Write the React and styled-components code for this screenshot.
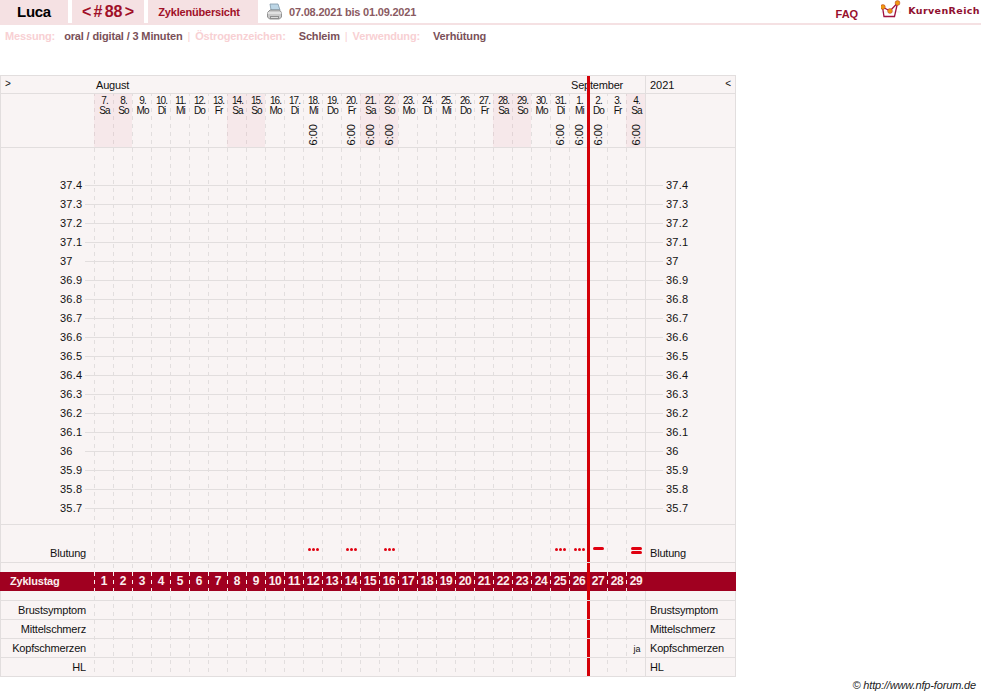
import React from "react";
import styled, { createGlobalStyle } from "styled-components";

const Global = createGlobalStyle`
  html, body { margin: 0; padding: 0; background: #fff; }
  body { font-family: "Liberation Sans", Arial, sans-serif; font-size: 11px; color: #111; }
`;

const GRID = "#e2dede";
const PANEL = "#f9f4f4";
const PINK = "#f5e1e3";
const COLS = "93px repeat(29, 19px) 90px";

const dashLayers = (bg, line, left, right) => `
  linear-gradient(${bg}, ${bg}) left top / ${left}px 100% no-repeat,
  linear-gradient(${bg}, ${bg}) right top / ${right}px 100% no-repeat,
  linear-gradient(to bottom, transparent 0 4px, ${bg} 4px 8px) 0 0 / 100% 8px repeat-y,
  linear-gradient(to right, ${line} 0 1px, transparent 1px) ${left}px 0 / 19px 100% repeat-x,
  ${bg}
`;

const Page = styled.div`
  width: 981px;
  height: 696px;
  overflow: hidden;
`;
const Header = styled.header`
  display: flex;
  align-items: stretch;
  height: 23px;
  border-bottom: 2px solid ${PINK};
`;
const Tab = styled.div`
  display: flex;
  align-items: center;
  justify-content: center;
  box-sizing: border-box;
  width: ${(p) => p.$w}px;
  margin-right: ${(p) => p.$gap ?? 4}px;
  background: ${PINK};
  font-weight: bold;
  color: #a01028;
`;
const NameTab = styled(Tab)`
  font-size: 15px;
  letter-spacing: -0.3px;
  color: #000;
`;
const CycleTab = styled(Tab)`
  font-size: 16px;
  word-spacing: -2.2px;
`;
const OverviewTab = styled(Tab)`
  font-size: 11px;
  letter-spacing: -0.2px;
  padding-right: 8px;
`;
const PrintIcon = styled.svg`
  width: 17px;
  height: 18px;
  margin: 3px 6px 0 8px;
`;
const DateRange = styled.div`
  align-self: center;
  font-size: 11px;
  font-weight: bold;
  letter-spacing: -0.2px;
  color: #8a5a62;
`;
const HeaderEnd = styled.div`
  margin-left: auto;
  display: flex;
  align-items: flex-start;
`;
const Faq = styled.div`
  font-size: 11px;
  font-weight: bold;
  color: #98102c;
  margin: 8px 23px 0 0;
`;
const LogoIcon = styled.svg`
  width: 20px;
  height: 19px;
  margin-right: 7px;
`;
const LogoText = styled.div`
  font-family: "DejaVu Sans", sans-serif;
  font-size: 9.5px;
  font-weight: bold;
  letter-spacing: 0.4px;
  color: #901030;
  margin: 5px 1px 0 0;
`;
const Legend = styled.div`
  display: flex;
  height: 50px;
  padding: 5px 0 0 5px;
  box-sizing: border-box;
  font-size: 11px;
  font-weight: bold;
  letter-spacing: -0.15px;
  line-height: 13px;
`;
const LegendKey = styled.span`
  color: #f8d0d3;
  margin-right: ${(p) => p.$gap}px;
`;
const LegendValue = styled.span`
  color: #7a5058;
`;
const LegendSep = styled.span`
  color: #f8d0d3;
  font-weight: normal;
  margin: 0 5px 0 5px;
`;

const Chart = styled.section`
  width: 736px;
  box-sizing: border-box;
  background: ${dashLayers(PANEL, GRID, 93, 90)};
  border: 1px solid ${GRID};
  border-bottom: 0;
  color: #111;
`;
const Row = styled.div`
  position: relative;
  display: grid;
  grid-template-columns: ${COLS};
  height: ${(p) => p.$h}px;
  border-bottom: ${(p) => (p.$plain ? "0" : `1px solid ${GRID}`)};
`;
const MonthRow = styled(Row)`
  background: ${PANEL};
`;
const TopBlock = styled.div`
  position: relative;
`;
const TempRow = styled(Row)`
  background: linear-gradient(${GRID}, ${GRID}) 0 9px / 100% 1px no-repeat;
`;
const Marker = styled.div`
  position: absolute;
  top: 0;
  bottom: 0;
  left: 586px;
  width: 3px;
  background: #d40008;
  z-index: 2;
`;
const MonthCell = styled.div`
  grid-column: span ${(p) => p.$span};
  padding-left: 2px;
  line-height: 18px;
  font-size: 11px;
  letter-spacing: -0.2px;
`;
const CornerCell = styled.div`
  display: flex;
  justify-content: space-between;
  padding: 0 4px;
  line-height: 18px;
  font-size: 11px;
  border-left: ${(p) => (p.$end ? `1px solid ${GRID}` : "0")};
`;
const Arrow = styled.span`
  font-size: 10px;
  line-height: 15px;
`;
const DayCell = styled.div`
  box-sizing: border-box;
  min-width: 0;
  padding-left: 1px;
`;
const DateCell = styled(DayCell)`
  display: flex;
  flex-direction: column;
  align-items: center;
  background: ${(p) => (p.$weekend ? "rgba(232, 140, 152, 0.11)" : "transparent")};
  padding: 2px 0 0 2px;
  font-size: 10px;
  line-height: 10px;
  letter-spacing: -0.9px;
`;
const Time = styled.div`
  margin-top: auto;
  margin-bottom: 2px;
  margin-right: 1px;
  writing-mode: vertical-rl;
  transform: rotate(180deg);
  font-size: 11px;
  line-height: 11px;
  letter-spacing: 0;
`;
const EndCell = styled.div`
  border-left: 1px solid ${GRID};
`;
const TempLabel = styled.div`
  display: block;
  width: 84px;
  height: 19px;
  box-sizing: border-box;
  padding-left: 59px;
  line-height: 19px;
  font-size: 11px;
  letter-spacing: 0.2px;
  background: ${PANEL};
`;
const TempEnd = styled(EndCell)`
  padding-left: 17px;
`;
const TempEndText = styled.span`
  display: block;
  height: 19px;
  padding-left: 3px;
  line-height: 19px;
  letter-spacing: 0.2px;
  background: ${PANEL};
`;
const RowLabel = styled.div`
  text-align: right;
  padding: ${(p) => p.$top || 0}px 8px 0 0;
  line-height: ${(p) => (p.$top ? "15px" : "18px")};
  font-size: 11px;
  letter-spacing: -0.2px;
`;
const EndLabel = styled(EndCell)`
  padding: ${(p) => p.$top || 0}px 0 0 4px;
  line-height: ${(p) => (p.$top ? "15px" : "18px")};
  font-size: 11px;
  letter-spacing: -0.2px;
`;
const BleedCell = styled(DayCell)`
  display: flex;
  flex-direction: column;
  align-items: center;
  gap: 1px;
  padding-top: 22px;
`;
const Dots = styled.div`
  display: flex;
  gap: 1px;
  margin-top: 1px;
`;
const Dot = styled.i`
  display: block;
  width: 3px;
  height: 3px;
  border-radius: 50%;
  background: #e00010;
`;
const Bar = styled.div`
  width: 11px;
  height: 3px;
  border-radius: 2px;
  background: #e00010;
`;
const CycleRow = styled(Row)`
  background: ${dashLayers("#a00020", "#fbeeee", 94, 91)};
  color: #fbeeee;
  font-weight: bold;
  margin: 0 -1px 0 -1px;
  grid-template-columns: 94px repeat(29, 19px) 91px;
`;
const CycleTitle = styled.div`
  padding-left: 10px;
  line-height: 19px;
  font-size: 11px;
  letter-spacing: -0.2px;
`;
const CycleMarker = styled(Marker)`
  left: 587px;
`;
const CycleDay = styled(DayCell)`
  text-align: center;
  line-height: 19px;
  font-size: 12px;
  letter-spacing: -0.3px;
`;
const NoteCell = styled(DayCell)`
  text-align: center;
  font-size: 9px;
  line-height: 20px;
  padding-left: 3px;
`;
const Credit = styled.footer`
  text-align: right;
  padding: 1px 5px 0 0;
  margin-top: 1px;
  font-size: 11px;
  line-height: 13px;
  font-style: italic;
  letter-spacing: -0.15px;
  color: #222;
`;

const NAMES = ["Sa", "So", "Mo", "Di", "Mi", "Do", "Fr"];
const DAYS = Array.from({ length: 29 }, (_, i) => {
  const date = i < 25 ? i + 7 : i - 24;
  return { i, date, name: NAMES[i % 7], weekend: i % 7 < 2 };
});
const TIMED = [11, 13, 14, 15, 24, 25, 26, 28];
const TEMPS = [
  "37.4", "37.3", "37.2", "37.1", "37", "36.9", "36.8", "36.7", "36.6",
  "36.5", "36.4", "36.3", "36.2", "36.1", "36", "35.9", "35.8", "35.7",
];
const BLEED = { 11: "dots", 13: "dots", 15: "dots", 24: "dots", 25: "dots", 26: "bar", 28: "double" };
const SYMPTOMS = ["Brustsymptom", "Mittelschmerz", "Kopfschmerzen", "HL"];

function EmptyDays() {
  return DAYS.map((d) => <DayCell key={d.i} />);
}

function BleedMark({ kind }) {
  if (kind === "dots") {
    return (
      <Dots>
        <Dot />
        <Dot />
        <Dot />
      </Dots>
    );
  }
  if (kind === "bar") return <Bar />;
  if (kind === "double") {
    return (
      <>
        <Bar />
        <Bar />
      </>
    );
  }
  return null;
}

export default function App() {
  return (
    <Page>
      <Global />
      <Header>
        <NameTab $w={68}>Luca</NameTab>
        <CycleTab $w={72}>&lt; # 88 &gt;</CycleTab>
        <OverviewTab $w={110} $gap={0}>Zyklenübersicht</OverviewTab>
        <PrintIcon viewBox="0 0 17 18">
          <path d="M4 1h8l2 6H5z" fill="#bcd6e6" stroke="#7f98a8" strokeWidth="0.8" />
          <path d="M1.5 9.5 4 7h9.5l2 2.5v4.5l-2 2h-10l-2-2z" fill="#c9c9c9" stroke="#7c7c7c" strokeWidth="0.8" />
          <path d="M1.5 10h14" stroke="#f2f2f2" strokeWidth="1.2" />
          <path d="M4 13h9v3H4z" fill="#8e8e8e" />
          <path d="M5 14.5h7" stroke="#eee" strokeWidth="0.8" />
        </PrintIcon>
        <DateRange>07.08.2021 bis 01.09.2021</DateRange>
        <HeaderEnd>
          <Faq>FAQ</Faq>
          <LogoIcon viewBox="0 0 20 19">
            <path d="M0 12h20M5 15v3M13 15v3" stroke="#eee" strokeWidth="0.8" fill="none" />
            <path d="M1.5 7l1.5 9.5h10.5L16.5 3" stroke="#a01040" strokeWidth="1.3" fill="none" />
            <path d="M1.5 7L9 11l7.5-8" stroke="#a01040" strokeWidth="1.3" fill="none" />
            <circle cx="1.9" cy="7" r="2.4" fill="#f09a10" stroke="#b03020" strokeWidth="0.5" />
            <circle cx="9" cy="11" r="2.4" fill="#f09a10" stroke="#b03020" strokeWidth="0.5" />
            <circle cx="16.5" cy="3" r="2.4" fill="#f09a10" stroke="#b03020" strokeWidth="0.5" />
          </LogoIcon>
          <LogoText>KurvenReich</LogoText>
        </HeaderEnd>
      </Header>
      <Legend>
        <LegendKey $gap={9}>Messung:</LegendKey>
        <LegendValue>oral / digital / 3 Minuten</LegendValue>
        <LegendSep>|</LegendSep>
        <LegendKey $gap={13}>Östrogenzeichen:</LegendKey>
        <LegendValue>Schleim</LegendValue>
        <LegendSep>|</LegendSep>
        <LegendKey $gap={13}>Verwendung:</LegendKey>
        <LegendValue>Verhütung</LegendValue>
      </Legend>
      <Chart>
        <TopBlock>
          <Marker />
          <MonthRow $h={17}>
            <CornerCell>
              <Arrow>&gt;</Arrow>
            </CornerCell>
            <MonthCell $span={25}>August</MonthCell>
            <MonthCell $span={4}>September</MonthCell>
            <CornerCell $end>
              <span>2021</span>
              <Arrow>&lt;</Arrow>
            </CornerCell>
          </MonthRow>
          <Row $h={53}>
            <div />
            {DAYS.map((d) => (
              <DateCell key={d.i} $weekend={d.weekend}>
                <span>{d.date}.</span>
                <span>{d.name}</span>
                {TIMED.includes(d.i) && <Time>6:00</Time>}
              </DateCell>
            ))}
            <EndCell />
          </Row>
          <Row $h={28} $plain>
            <div />
            <EmptyDays />
            <EndCell />
          </Row>
          {TEMPS.map((t) => (
            <TempRow key={t} $h={19} $plain>
              <TempLabel>{t}</TempLabel>
              <EmptyDays />
              <TempEnd>
                <TempEndText>{t}</TempEndText>
              </TempEnd>
            </TempRow>
          ))}
          <Row $h={6}>
            <div />
            <EmptyDays />
            <EndCell />
          </Row>
        </TopBlock>
        <Row $h={37}>
          <Marker />
          <RowLabel $top={21}>Blutung</RowLabel>
          {DAYS.map((d) => (
            <BleedCell key={d.i}>
              <BleedMark kind={BLEED[d.i]} />
            </BleedCell>
          ))}
          <EndLabel $top={21}>Blutung</EndLabel>
        </Row>
        <Row $h={9} $plain>
          <Marker />
          <div />
          <EmptyDays />
          <EndCell />
        </Row>
        <CycleRow $h={19} $plain>
          <CycleTitle>Zyklustag</CycleTitle>
          {DAYS.map((d) => (
            <CycleDay key={d.i}>{d.i + 1}</CycleDay>
          ))}
          <div />
          <CycleMarker />
        </CycleRow>
        <Row $h={9}>
          <Marker />
          <div />
          <EmptyDays />
          <EndCell />
        </Row>
        {SYMPTOMS.map((s) => (
          <Row key={s} $h={18}>
            <Marker />
            <RowLabel>{s}</RowLabel>
            {DAYS.map((d) =>
              s === "Kopfschmerzen" && d.i === 28 ? (
                <NoteCell key={d.i}>ja</NoteCell>
              ) : (
                <DayCell key={d.i} />
              )
            )}
            <EndLabel>{s}</EndLabel>
          </Row>
        ))}
      </Chart>
      <Credit>© http://www.nfp-forum.de</Credit>
    </Page>
  );
}
